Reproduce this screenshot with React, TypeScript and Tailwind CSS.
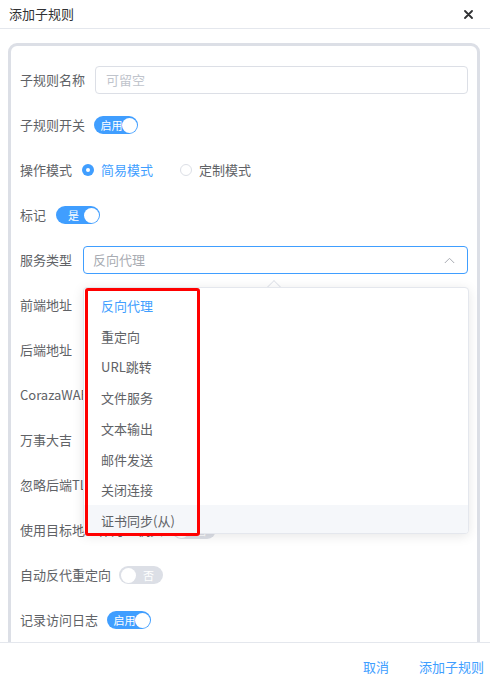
import React from "react";

function Switch({ on, text }: { on: boolean; text: string }) {
  return (
    <div
      className={
        "relative w-[44px] h-[18px] rounded-full shrink-0 flex items-center " +
        (on ? "bg-[#409eff]" : "bg-[#dcdfe6]")
      }
    >
      {on ? (
        <>
          <span className="ml-[4px] w-[27px] text-center text-[11px] leading-[18px] text-white">{text}</span>
          <span className="absolute right-[1.5px] top-[1.5px] w-[15px] h-[15px] rounded-full bg-white" />
        </>
      ) : (
        <>
          <span className="absolute left-[1.5px] top-[1.5px] w-[15px] h-[15px] rounded-full bg-white" />
          <span className="ml-[18px] w-[23px] text-center text-[11px] leading-[18px] text-white">{text}</span>
        </>
      )}
    </div>
  );
}

function Row({ label, children, gap = "gap-[9px]" }: { label: string; children?: React.ReactNode; gap?: string }) {
  return (
    <div className={"flex items-center h-[28px] " + gap}>
      <span className="text-[13px] leading-[18px] text-[#606266] whitespace-nowrap shrink-0">{label}</span>
      {children}
    </div>
  );
}

const items = ["反向代理", "重定向", "URL跳转", "文件服务", "文本输出", "邮件发送", "关闭连接", "证书同步(从)"];

export default function App() {
  return (
    <div className="w-[490px] h-[681px] bg-white flex flex-col font-['Noto_Sans_CJK_SC',sans-serif] overflow-hidden">
      {/* header */}
      <div className="h-[29px] shrink-0 border-b border-[#e4e7ed] flex items-center justify-between pl-[9px] pr-[17px]">
        <span className="text-[13px] leading-[18px] text-[#303133]">添加子规则</span>
        <svg width="9" height="9" viewBox="0 0 9 9" className="mt-[1px]">
          <path d="M1 1 L8 8 M8 1 L1 8" stroke="#303133" strokeWidth="1.8" strokeLinecap="round" />
        </svg>
      </div>

      {/* body */}
      <div className="flex-1 min-h-0 overflow-hidden pt-[14px] pl-[8px] pr-[10px]">
        <div className="border-[3px] border-[#dcdfe6] rounded-[9px] pt-[20px] px-[9px] pb-[20px]">
          <div className="flex flex-col gap-[17px]">
            <Row label="子规则名称" gap="gap-[10px]">
              <div className="flex-1 h-[28px] border border-[#dcdfe6] rounded-[4px] flex items-center px-[10px]">
                <span className="text-[13px] text-[#c0c4cc]">可留空</span>
              </div>
            </Row>
            <Row label="子规则开关">
              <Switch on text="启用" />
            </Row>
            <Row label="操作模式" gap="gap-[10px]">
              <div className="flex items-center">
                <span className="w-[12px] h-[12px] rounded-full bg-[#409eff] flex items-center justify-center">
                  <span className="w-[4px] h-[4px] rounded-full bg-white" />
                </span>
                <span className="ml-[7px] text-[13px] text-[#409eff]">简易模式</span>
                <span className="ml-[27px] w-[12px] h-[12px] rounded-full border border-[#dcdfe6] bg-white" />
                <span className="ml-[7px] text-[13px] text-[#606266]">定制模式</span>
              </div>
            </Row>
            <Row label="标记" gap="gap-[10px]">
              <Switch on text="是" />
            </Row>
            <Row label="服务类型" gap="gap-[11px]">
              <div className="relative flex-1 h-[28px]">
                <div className="h-[28px] border border-[#409eff] rounded-[4px] flex items-center justify-between pl-[9px] pr-[12px]">
                  <span className="text-[13px] text-[#a8abb2]">反向代理</span>
                  <svg width="11" height="7" viewBox="0 0 11 7">
                    <path d="M0.8 6 L5.5 1.3 L10.2 6" fill="none" stroke="#a8abb2" strokeWidth="1" />
                  </svg>
                </div>
                {/* dropdown */}
                <div className="absolute z-10 left-0 top-[41px] w-[386px]">
                  <div className="absolute left-[186px] -top-[5px] w-[10px] h-[10px] rotate-45 bg-white border-l border-t border-[#e4e7ed]" />
                  <div className="relative h-[247px] bg-white border border-[#e4e7ed] rounded-[4px] shadow-[0_2px_12px_0_rgba(0,0,0,0.1)] overflow-hidden pt-[2.5px]">
                    {items.map((it, i) => (
                      <div
                        key={it}
                        className={
                          "h-[30.7px] flex items-center px-[17px] text-[13px] " +
                          (i === 0 ? "text-[#409eff] " : "text-[#606266] ") +
                          (i === items.length - 1 ? "bg-[#f5f7fa]" : "")
                        }
                      >
                        {it}
                      </div>
                    ))}
                  </div>
                  <div className="absolute left-[2px] top-[1px] w-[115px] h-[248px] border-[3.5px] border-[#ff0000] rounded-[3px]" />
                </div>
              </div>
            </Row>
            <Row label="前端地址" gap="gap-[12px]">
              <div className="flex-1 h-[28px] border border-[#dcdfe6] rounded-[4px]" />
            </Row>
            <Row label="后端地址" gap="gap-[12px]">
              <div className="flex-1 h-[28px] border border-[#dcdfe6] rounded-[4px]" />
            </Row>
            <Row label="CorazaWAF防护">
              <Switch on={false} text="否" />
            </Row>
            <Row label="万事大吉" gap="gap-[16px]">
              <Switch on={false} text="否" />
            </Row>
            <Row label="忽略后端TLS证书验证">
              <Switch on={false} text="否" />
            </Row>
            <Row label="使用目标地址作为主机头">
              <Switch on={false} text="否" />
            </Row>
            <Row label="自动反代重定向" gap="gap-[8px]">
              <Switch on={false} text="否" />
            </Row>
            <Row label="记录访问日志">
              <Switch on text="启用" />
            </Row>
          </div>
        </div>
      </div>

      {/* footer */}
      <div className="h-[39px] shrink-0 border-t border-[#e4e7ed] flex items-start justify-end pt-[15px] pr-[6px] gap-[30px]">
        <span className="text-[13px] leading-[18px] text-[#409eff]">取消</span>
        <span className="text-[13px] leading-[18px] text-[#409eff]">添加子规则</span>
      </div>
    </div>
  );
}
